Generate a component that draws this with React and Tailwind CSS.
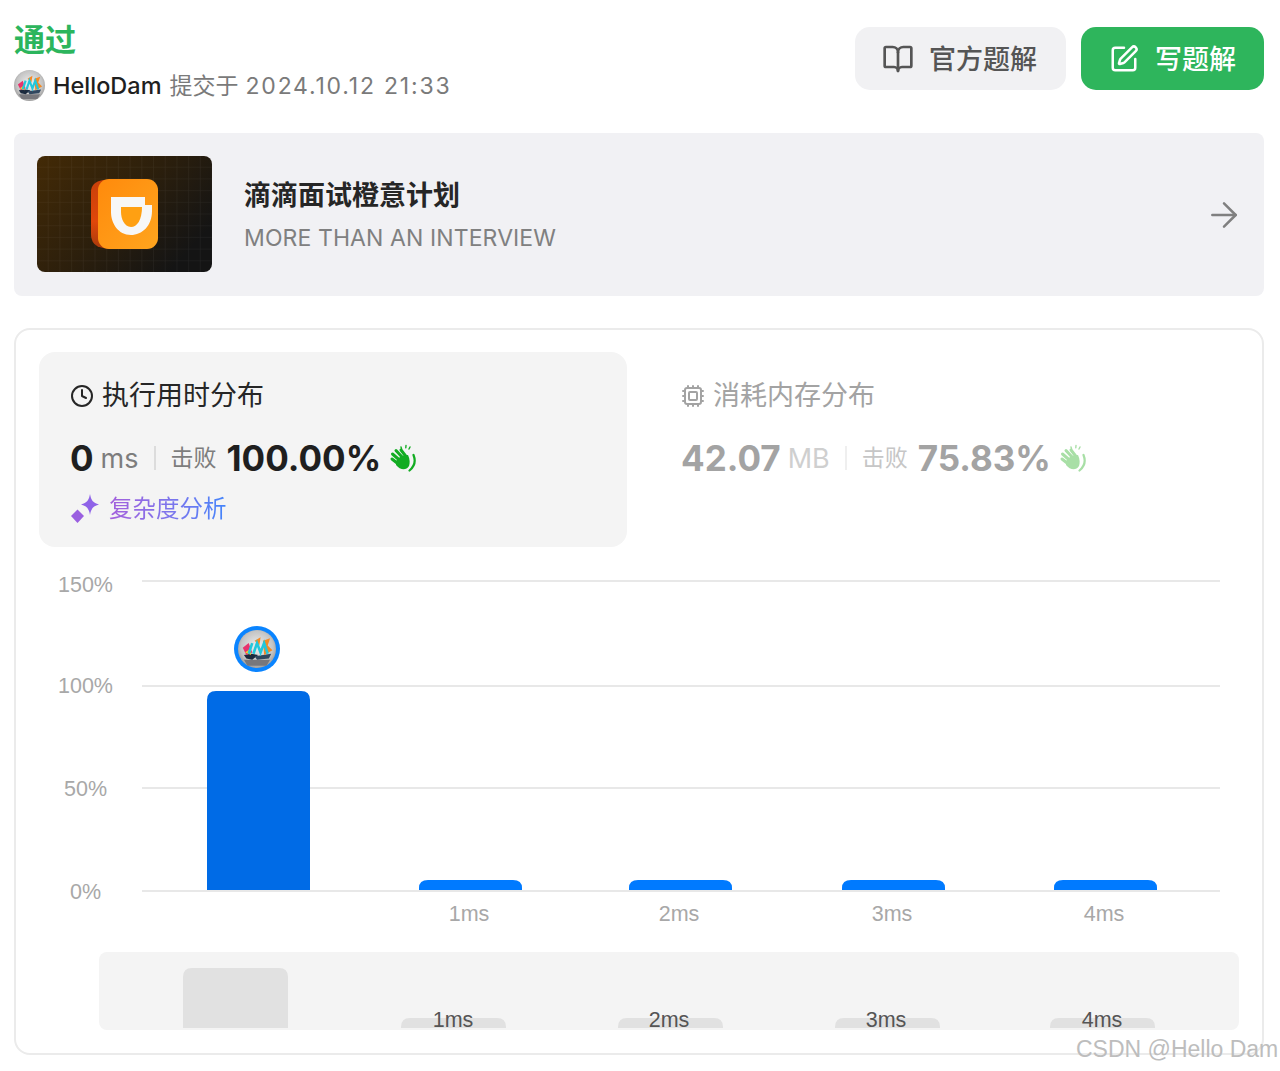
import React from "react";
import { ArrowRight, BookOpen, Clock, Cpu, SquarePen } from "lucide-react";

const cjk = "font-['Inter','Noto_Sans_CJK_SC',sans-serif]";

function Avatar({ id, className }) {
  return (
    <svg viewBox="0 0 32 32" className={className}>
      <defs>
        <radialGradient id={id} cx="50%" cy="45%" r="60%">
          <stop offset="0%" stopColor="#f0f0f0" />
          <stop offset="70%" stopColor="#c4c4c4" />
          <stop offset="100%" stopColor="#8e8e8e" />
        </radialGradient>
      </defs>
      <circle cx="16" cy="16" r="16" fill={`url(#${id})`} />
      <path d="M5 25 L27 25 L24 30 L8 30 Z" fill="#77777c" />
      <path d="M5 21 L11 20 L17 21 L12 25 L7 24 Z" fill="#1b2a3e" />
      <path d="M14 22 L28 20 L26 24 L16 25 Z" fill="#30475f" />
      <path d="M4 15 L9 11 L12 19 L7 21 Z" fill="#e8336d" />
      <path d="M21 9 L27 7 L25 13 L29 17 L22 21 Z" fill="#f58a23" />
      <path d="M6 19 L10 16 L11 21 Z" fill="#f5d21f" />
      <path d="M14 9 L19 6 L18 13 Z" fill="#f58a23" />
      <path d="M9 20 L12 11 M13 20 L16 11 L19 19 L22 11 L25 20" fill="none" stroke="#22c7dc" strokeWidth="2.2" />
    </svg>
  );
}

function DidiLogo() {
  return (
    <svg viewBox="0 0 175 116" className="block w-[175px] h-[116px] rounded-lg mb-[1px]">
      <defs>
        <linearGradient id="didiBg" x1="0" y1="0" x2="1" y2="0.6">
          <stop offset="0%" stopColor="#432a06" />
          <stop offset="55%" stopColor="#2c1f0c" />
          <stop offset="100%" stopColor="#141414" />
        </linearGradient>
        <linearGradient id="didiFace" x1="0" y1="0" x2="1" y2="1">
          <stop offset="0%" stopColor="#ff8a0c" />
          <stop offset="100%" stopColor="#ffa51e" />
        </linearGradient>
        <linearGradient id="didiSide" x1="0" y1="0" x2="0" y2="1">
          <stop offset="0%" stopColor="#c8400a" />
          <stop offset="60%" stopColor="#e0470a" />
          <stop offset="100%" stopColor="#a83a0c" />
        </linearGradient>
        <pattern id="didiGrid" width="11.7" height="11.7" patternUnits="userSpaceOnUse">
          <path d="M11.7 0 V11.7 M0 11.7 H11.7" fill="none" stroke="#ffffff" strokeOpacity="0.07" strokeWidth="1" />
        </pattern>
      </defs>
      <rect width="175" height="116" fill="url(#didiBg)" />
      <rect width="175" height="116" fill="url(#didiGrid)" />
      <path d="M66 24 Q54 26 54 36 V78 Q54 90 66 92 L72 93 V24 Z" fill="url(#didiSide)" />
      <rect x="61" y="23" width="60" height="70" rx="11" fill="url(#didiFace)" />
      <path d="M74 41 H108 V49 H115 V55 C115 70 105 79 94 79 C81 79 74 67 74 56 Z" fill="#f7f7f7" />
      <path d="M84 51 H105 C105 64 100 71 94 71 C87 71 84 62 84 56 Z" fill="#ffa012" />
    </svg>
  );
}

function Clap({ className }) {
  return (
    <svg viewBox="0 0 28 28" className={className} fill="none" stroke="currentColor" strokeLinecap="round">
      <path d="M12 3 L12.6 5 M17 1.5 L16.8 3.8 M21 3 L20 5" strokeWidth="1.4" />
      <path d="M3.5 10 L11 16.5 M3 15 L10 20.5 M7 6.5 L14 14 M12 6 L17 12.5" strokeWidth="3" />
      <path d="M7 17 L12 12 L19 11 C21 15 21 19 20 22 C17 27 11 26 7 21 Z" fill="currentColor" stroke="none" />
      <path d="M24.5 11 C26.5 16 26 22 20.5 26.5" strokeWidth="2.2" />
    </svg>
  );
}

function Sparkle() {
  return (
    <svg viewBox="0 0 28 30" className="w-7 h-[30px]">
      <path d="M19 0 C20 6 22 9 28 10.5 C22 12 20 15 19 21 C18 15 16 12 10 10.5 C16 9 18 6 19 0 Z" fill="#8f63e8" />
      <path d="M6.5 15.5 L13 22 L6.5 29 L0 22 Z" fill="#9a5fe0" />
    </svg>
  );
}

function Metric({ value, unit, pct, muted }) {
  return (
    <div className="flex items-center h-10">
      <span className={`text-[35px] font-bold leading-none ${muted ? "text-[#a3a3a3]" : "text-[#1f1f1f]"}`}>{value}</span>
      <span className={`text-[27px] ml-[7px] leading-none ${muted ? "text-[#cfcfcf]" : "text-[#7d7d7d]"}`}>{unit}</span>
      <span className={`w-[2px] h-6 ml-[15px] mr-[15px] ${muted ? "bg-[#efefef]" : "bg-[#dcdcdc]"}`} />
      <span className={`text-[23px] leading-none ${muted ? "text-[#c6c6c6]" : "text-[#7d7d7d]"}`}>击败</span>
      <span className={`text-[35px] font-bold leading-none ml-[10px] ${muted ? "text-[#a3a3a3]" : "text-[#1f1f1f]"}`}>{pct}</span>
      <Clap className={`w-7 h-7 ml-2 ${muted ? "text-[#a8dfa6]" : "text-[#12ac22]"}`} />
    </div>
  );
}

const gridLines = [
  { y: 251, label: "150%", x: 42, base: 262 },
  { y: 356, label: "100%", x: 42, base: 363 },
  { y: 458, label: "50%", x: 48, base: 466 },
  { y: 561, label: "0%", x: 54, base: 569 },
];
const mainBars = [
  { x: 403, label: "1ms" },
  { x: 613, label: "2ms" },
  { x: 826, label: "3ms" },
  { x: 1038, label: "4ms" },
];
const miniBars = [
  { x: 302, label: "1ms", tx: 354 },
  { x: 519, label: "2ms", tx: 570 },
  { x: 736, label: "3ms", tx: 787 },
  { x: 951, label: "4ms", tx: 1003 },
];

// the bar chart, coordinates relative to the card
function Chart() {
  return (
    <svg viewBox="0 0 1250 620" className="block w-[1250px] h-[620px] font-['Liberation_Sans',sans-serif]">
      {gridLines.map((g) => (
        <g key={g.label}>
          <line x1="126" x2="1204" y1={g.y} y2={g.y} stroke="#e8e8e8" strokeWidth="2" />
          <text x={g.x} y={g.base} fontSize="21.5" fill="#a8a8a8">{g.label}</text>
        </g>
      ))}
      <path d="M191 560 V370 Q191 361 200 361 H285 Q294 361 294 370 V560 Z" fill="#006be6" />
      {mainBars.map((b) => (
        <g key={b.label}>
          <path d={`M${b.x} 560 V558 Q${b.x} 550 ${b.x + 9} 550 H${b.x + 94} Q${b.x + 103} 550 ${b.x + 103} 558 V560 Z`} fill="#007aff" />
          <text x={b.x + 50} y="591" fontSize="21.5" fill="#a8a8a8" textAnchor="middle">{b.label}</text>
        </g>
      ))}
      <circle cx="241" cy="319" r="23" fill="#0a84ff" />
    </svg>
  );
}

function MiniChart() {
  return (
    <svg viewBox="0 0 1140 78" className="block w-[1140px] h-[78px] rounded-lg overflow-visible bg-[#f4f4f4] font-['Liberation_Sans',sans-serif]">
      <path d="M84 76 V25 Q84 16 93 16 H180 Q189 16 189 25 V76 Z" fill="#e1e1e1" />
      {miniBars.map((b) => (
        <g key={b.label}>
          <path d={`M${b.x} 76 V75 Q${b.x} 66 ${b.x + 9} 66 H${b.x + 96} Q${b.x + 105} 66 ${b.x + 105} 75 V76 Z`} fill="#e1e1e1" />
          <text x={b.tx} y="75" fontSize="21.5" fill="#555555" textAnchor="middle">{b.label}</text>
        </g>
      ))}
    </svg>
  );
}

export default function App() {
  return (
    <div className={`relative w-[1280px] h-[1071px] overflow-hidden bg-white pl-[14px] pr-4 ${cjk}`}>
      {/* Header */}
      <div className="flex justify-between h-[133px]">
        <div className="pt-[21px]">
          <div className="text-[31px] leading-[38px] font-semibold text-[#2cb55d]">通过</div>
          <div className="flex items-center mt-[10px] h-[34px]">
            <Avatar id="avatarSmall" className="w-[31px] h-[31px] -mt-[2px]" />
            <span className="ml-2 text-[23.5px] font-medium text-[#1f1f1f]">HelloDam</span>
            <span className="ml-2 text-[23px] text-[#7a7a7a]">提交于</span>
            <span className="ml-[7px] text-[23px] text-[#7a7a7a] tracking-[1.8px]">2024.10.12 21:33</span>
          </div>
        </div>
        <div className="flex gap-[15px] pt-[27px]">
          <button className="flex items-center justify-center gap-[15px] w-[211px] h-[63px] rounded-[15px] bg-[#f1f1f3] text-[#555555] text-[27px] font-medium">
            <BookOpen className="w-8 h-8 -ml-[2px]" strokeWidth={2} />
            <span className="mt-[3px]">官方题解</span>
          </button>
          <button className="flex items-center justify-center gap-[16px] w-[183px] h-[63px] rounded-[15px] bg-[#2eb55c] text-white text-[27px] font-medium">
            <SquarePen className="w-[30px] h-[30px]" strokeWidth={2} />
            <span className="mt-[3px]">写题解</span>
          </button>
        </div>
      </div>

      {/* Banner */}
      <div className="flex items-center h-[163px] pl-[23px] pr-[22px] rounded-lg bg-[#f1f1f4]">
        <DidiLogo />
        <div className="ml-8 flex-1 pt-[3px]">
          <div className="text-[27px] leading-[36px] font-semibold text-[#262626]">滴滴面试橙意计划</div>
          <div className="mt-[8px] text-[23px] leading-[32px] text-[#808080] tracking-[0.1px]">MORE THAN AN INTERVIEW</div>
        </div>
        <ArrowRight className="w-10 h-10 -mr-[2px] text-[#808080]" strokeWidth={1.5} />
      </div>

      {/* Distribution card */}
      <div className="relative mt-8 h-[727px] rounded-2xl border-2 border-[#ebebeb]">
        <div className="flex pt-[22px] pl-[23px]">
          <div className="w-[588px] h-[195px] rounded-2xl bg-[#f4f4f4] pl-[31px] pt-[26px]">
            <div className="flex items-center gap-2 h-9 text-[27px] text-[#262626]">
              <Clock className="w-6 h-6" strokeWidth={2} />
              执行用时分布
            </div>
            <div className="mt-6">
              <Metric value="0" unit="ms" pct="100.00%" />
            </div>
            <div className="flex items-center gap-[10px] mt-[15px] ml-[1px]">
              <Sparkle />
              <span className="text-[23.5px] leading-8 bg-gradient-to-r from-[#a45fdc] to-[#3f84fb] bg-clip-text text-transparent">复杂度分析</span>
            </div>
          </div>
          <div className="pl-[54px] pt-[26px]">
            <div className="flex items-center gap-2 h-9 text-[27px] text-[#a3a3a3]">
              <Cpu className="w-6 h-6" strokeWidth={2} />
              消耗内存分布
            </div>
            <div className="mt-6">
              <Metric value="42.07" unit="MB" pct="75.83%" muted />
            </div>
          </div>
        </div>

        <div className="absolute left-0 top-0 pointer-events-none">
          <Chart />
        </div>
        <div className="absolute left-[219px] top-[297px] w-[44px] h-[44px]">
          <Avatar id="avatarChart" className="w-[38px] h-[38px] m-[3px]" />
        </div>
        <div className="absolute left-[83px] top-[622px]">
          <MiniChart />
        </div>
      </div>

      {/* Watermark */}
      <div className="absolute left-[1076px] top-[1034px] text-[23px] leading-[30px] whitespace-nowrap text-[#bdbdbd] font-['Liberation_Sans',sans-serif]">
        CSDN @Hello Dam
      </div>
    </div>
  );
}
